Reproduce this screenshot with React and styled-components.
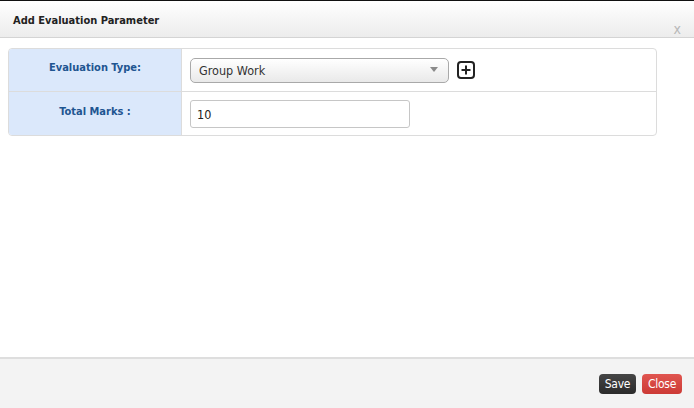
import React from "react";
import styled, { createGlobalStyle } from "styled-components";

const GlobalStyle = createGlobalStyle`
  html, body {
    margin: 0;
    padding: 0;
    background: #ffffff;
    font-family: "DejaVu Sans Condensed", "DejaVu Sans", sans-serif;
  }
`;

function App() {
  return (
    <>
      <GlobalStyle />
      <Dialog>
        <Header>
          <Title>Add Evaluation Parameter</Title>
          <CloseX>x</CloseX>
        </Header>
        <Body>
          <FormTable>
            <Row>
              <Label>Evaluation Type:</Label>
              <Field>
                <Select>
                  <span>Group Work</span>
                  <Arrow />
                </Select>
                <AddButton aria-label="add">
                  <svg width="18" height="18" viewBox="0 0 18 18">
                    <rect x="1" y="1" width="16" height="16" rx="3" fill="none" stroke="#222" strokeWidth="2" />
                    <path d="M9 4.5v9M4.5 9h9" stroke="#222" strokeWidth="2" />
                  </svg>
                </AddButton>
              </Field>
            </Row>
            <Row last>
              <Label>Total Marks :</Label>
              <Field>
                <Input defaultValue="10" />
              </Field>
            </Row>
          </FormTable>
        </Body>
        <Footer>
          <Button>Save</Button>
          <Button danger>Close</Button>
        </Footer>
      </Dialog>
    </>
  );
}

const Dialog = styled.div`
  width: 694px;
  height: 408px;
  display: flex;
  flex-direction: column;
  border-top: 1px solid #111;
  box-sizing: border-box;
`;

const Header = styled.div`
  height: 36px;
  display: flex;
  align-items: center;
  justify-content: space-between;
  padding: 0 13px 0 13px;
  background: linear-gradient(#ffffff, #ececec);
  border-bottom: 1px solid #d4d4d4;
`;

const Title = styled.h3`
  margin: 0;
  font-size: 11px;
  font-weight: bold;
  color: #222;
  position: relative;
  top: 1px;
`;

const CloseX = styled.span`
  align-self: flex-end;
  margin-bottom: 0;
  font-size: 14px;
  color: #b8b8b8;
`;

const Body = styled.div`
  flex: 1;
  padding: 10px 37px 0 8px;
  box-sizing: border-box;
`;

const FormTable = styled.div`
  border: 1px solid #dcdcdc;
  border-radius: 4px;
  overflow: hidden;
`;

const Row = styled.div`
  display: grid;
  grid-template-columns: 173px 1fr;
  height: ${(p) => (p.last ? "43px" : "42px")};
  border-bottom: ${(p) => (p.last ? "none" : "1px solid #dcdcdc")};
`;

const Label = styled.div`
  background: #dbe8fb;
  border-right: 1px solid #dcdcdc;
  display: flex;
  align-items: center;
  justify-content: center;
  font-size: 11px;
  font-weight: bold;
  color: #1f5591;
  padding-bottom: 5px;
`;

const Field = styled.div`
  display: flex;
  align-items: center;
  gap: 8px;
  padding-left: 8px;
`;

const Select = styled.div`
  width: 259px;
  height: 25px;
  box-sizing: border-box;
  border: 1px solid #a9a9a9;
  border-radius: 5px;
  background: linear-gradient(#ffffff, #e9e9e9);
  display: flex;
  align-items: center;
  justify-content: space-between;
  padding: 0 10px 0 8px;
  font-size: 12.5px;
  color: #333;
`;

const Arrow = styled.i`
  width: 0;
  height: 0;
  border-left: 4px solid transparent;
  border-right: 4px solid transparent;
  border-top: 5px solid #8a8a8a;
  margin-bottom: 2px;
`;

const AddButton = styled.span`
  display: flex;
  width: 18px;
  height: 18px;
`;

const Input = styled.input`
  width: 220px;
  height: 28px;
  box-sizing: border-box;
  border: 1px solid #c6c6c6;
  border-radius: 3px;
  padding: 0 6px;
  font-family: "DejaVu Sans Condensed", "DejaVu Sans", sans-serif;
  font-size: 12.5px;
  color: #222;
  margin-top: 1px;
  outline: none;
`;

const Footer = styled.div`
  height: 49px;
  display: flex;
  align-items: center;
  justify-content: flex-end;
  gap: 6px;
  padding-right: 12px;
  background: #f3f3f3;
  border-top: 2px solid #dedede;
`;

const Button = styled.button`
  height: 20px;
  padding: 0 6px;
  border: none;
  border-radius: 4px;
  font-family: "DejaVu Sans Condensed", "DejaVu Sans", sans-serif;
  font-size: 12px;
  color: #fff;
  background: ${(p) =>
    p.danger
      ? "linear-gradient(#e05550, #cc3a35)"
      : "linear-gradient(#454545, #2b2b2b)"};
  letter-spacing: -0.3px;
`;

export default App;
